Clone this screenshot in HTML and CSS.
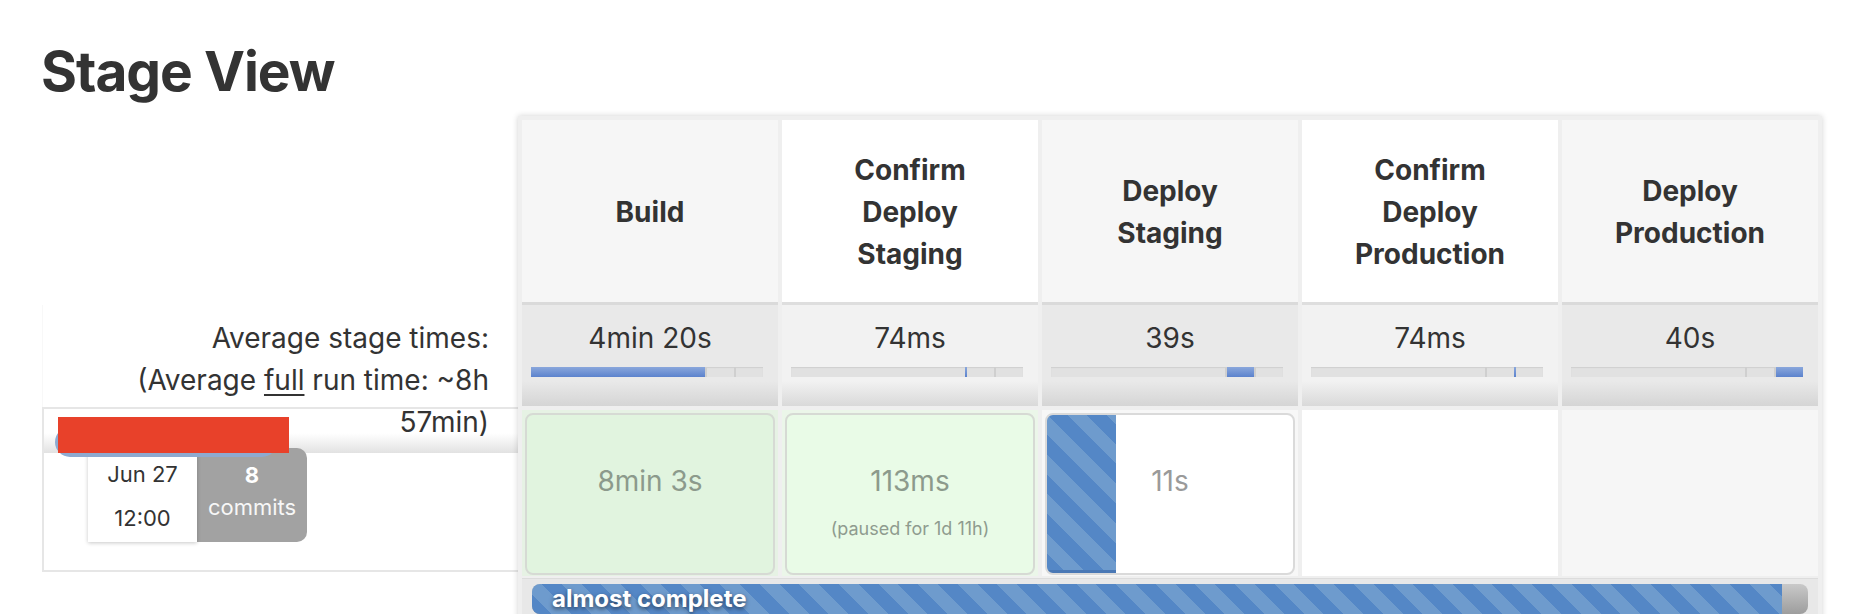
FILE: index.html
```html
<!DOCTYPE html>
<html lang="en">
<head>
<meta charset="utf-8">
<title>Stage View</title>
<link rel="stylesheet" href="styles.css">
</head>
<body>
<h1 class="title">Stage View</h1>
<div class="view">
  <div class="runs">
    <div class="runs-head"></div>
    <div class="avg-label">Average stage times:<br>(Average <u>full</u> run time: ~8h<br>57min)</div>
    <div class="run-row">
      <div class="run-band">
        <div class="run-pill"><span class="redact"></span></div>
      </div>
      <div class="run-meta">
        <div class="date">Jun 27<br>12:00</div>
        <div class="commits"><b>8</b><br>commits</div>
      </div>
    </div>
  </div>

  <div class="stages">
    <div class="h odd">Build</div>
    <div class="h even">Confirm Deploy Staging</div>
    <div class="h odd">Deploy Staging</div>
    <div class="h even">Confirm Deploy Production</div>
    <div class="h odd">Deploy Production</div>

    <div class="a odd">4min 20s
      <div class="bar"><span class="seg s1 on"></span><span class="mark"></span><span class="seg s3"></span><span class="mark"></span><span class="seg s5"></span></div>
    </div>
    <div class="a even">74ms
      <div class="bar"><span class="seg s1"></span><span class="mark on"></span><span class="seg s3"></span><span class="mark"></span><span class="seg s5"></span></div>
    </div>
    <div class="a odd">39s
      <div class="bar"><span class="seg s1"></span><span class="mark"></span><span class="seg s3 on"></span><span class="mark"></span><span class="seg s5"></span></div>
    </div>
    <div class="a even">74ms
      <div class="bar"><span class="seg s1"></span><span class="mark"></span><span class="seg s3"></span><span class="mark on"></span><span class="seg s5"></span></div>
    </div>
    <div class="a odd">40s
      <div class="bar"><span class="seg s1"></span><span class="mark"></span><span class="seg s3"></span><span class="mark"></span><span class="seg s5 on"></span></div>
    </div>

    <div class="c ok odd"><div class="box ok-odd">8min 3s</div></div>
    <div class="c ok even"><div class="box ok-even">113ms<div class="paused">(paused for 1d 11h)</div></div></div>
    <div class="c run-cell"><div class="box running">11s</div></div>
    <div class="c blank-even"></div>
    <div class="c blank-odd"></div>

    <div class="progress-row">
      <div class="progress"><div class="progress-fill" style="width: 98%">almost complete</div></div>
    </div>
  </div>
</div>
</body>
</html>
```

FILE: styles.css
```css
html, body {
  margin: 0;
  padding: 0;
  background: #fff;
}
body {
  font-family: Inter, "Noto Sans", sans-serif;
  color: #333;
  overflow: hidden;
  height: 614px;
}

.title {
  margin: 0 0 8px 41px;
  padding-top: 36px;
  height: 72px;
  font-size: 55px;
  line-height: 70px;
  font-weight: 700;
  letter-spacing: -1px;
  color: #333;
}

.view {
  display: flex;
  align-items: flex-start;
  padding-left: 42px;
}

/* left column: run info */
.runs {
  width: 476px;
  flex: none;
}
.runs-head {
  height: 189px;
}
.avg-label {
  height: 102px;
  box-sizing: border-box;
  padding: 12px 29px 0 0;
  text-align: right;
  font-size: 28px;
  line-height: 42px;
  color: #333;
  border-left: 1px solid #f8f8f8;
}
.avg-label u {
  text-underline-offset: 4px;
  text-decoration-thickness: 2px;
}
.run-row {
  height: 161px;
  border: 2px solid #e6e6e6;
  border-right: none;
}
.run-band {
  height: 44px;
  box-sizing: border-box;
  padding: 18px 0 0 11px;
  background: linear-gradient(#ffffff 55%, #e2e2e2);
}
.run-pill {
  position: relative;
  z-index: 2;
  width: 222px;
  height: 30px;
  border-radius: 15px;
  background: #8eaad0;
}
.redact {
  position: absolute;
  left: 3px;
  top: -10px;
  width: 231px;
  height: 36px;
  background: #e8412a;
}
.run-meta {
  display: flex;
  align-items: flex-start;
  margin: -5px 0 0 44px;
}
.date {
  margin-top: 4px;
  width: 109px;
  height: 90px;
  background: #fff;
  box-shadow: 0 1px 4px rgba(0, 0, 0, 0.22);
  text-align: center;
  font-size: 22px;
  line-height: 44px;
  color: #333;
  position: relative;
  z-index: 1;
}
.commits {
  width: 110px;
  height: 94px;
  box-sizing: border-box;
  padding-top: 11px;
  background: #a2a2a2;
  border-radius: 0 10px 10px 0;
  text-align: center;
  font-size: 22px;
  line-height: 32px;
  color: #f7f7f7;
}
.commits b {
  color: #fff;
}

/* stage table */
.stages {
  width: 1304px;
  flex: none;
  box-sizing: border-box;
  padding: 4px 4px 0;
  background: #efefef;
  box-shadow: 0 0 6px rgba(0, 0, 0, 0.18);
  display: grid;
  grid-template-columns: repeat(5, 256px);
  grid-template-rows: 182px 104px 170px auto;
  column-gap: 4px;
}

.h {
  display: flex;
  align-items: center;
  justify-content: center;
  text-align: center;
  padding: 2px 42px 0;
  font-size: 28px;
  line-height: 42px;
  font-weight: 700;
  color: #333;
}
.h.odd { background: #f6f6f6; }
.h.even { background: #ffffff; }

.a {
  padding-top: 15px;
  box-sizing: border-box;
  text-align: center;
  font-size: 28px;
  line-height: 42px;
  color: #333;
}
.a.odd {
  background: linear-gradient(#dadada 0 3px, #e9e9e9 3px 76%, #d5d5d5 100%);
}
.a.even {
  background: linear-gradient(#dedede 0 3px, #f2f2f2 3px 76%, #d9d9d9 100%);
}

.bar {
  display: flex;
  height: 10px;
  margin: 8px 15px 0 9px;
  background: #e1e1e1;
  box-shadow: inset 0 1px 1px rgba(0, 0, 0, 0.08);
}
.seg { display: block; height: 100%; }
.s1 { width: 174px; }
.s3 { width: 27px; }
.s5 { flex: 1; }
.mark {
  display: block;
  width: 2px;
  height: 100%;
  background: #cfcfcf;
}
.seg.on, .mark.on {
  background: linear-gradient(#8aa7dc, #5b82cd);
}

.c {
  margin-top: 4px;
  padding: 3px 3px 1px;
  box-sizing: border-box;
}
.c.ok.odd { background: #e6f2e4; }
.c.ok.even { background: #ebf6e9; }
.c.run-cell { background: #f7f7f7; }
.c.blank-even { background: #ffffff; }
.c.blank-odd { background: #f6f6f6; }

.box {
  height: 100%;
  box-sizing: border-box;
  border: 2px solid #d6dad4;
  border-radius: 8px;
  padding-top: 45px;
  text-align: center;
  font-size: 28px;
  line-height: 42px;
  color: #8c9a8c;
}
.box.ok-odd { background: #e1f4df; }
.box.ok-even { background: #e9fbe7; }
.paused {
  margin-top: 15px;
  font-size: 18px;
  line-height: 24px;
  color: #8f9b8f;
}
.box.running {
  border-color: #dadada;
  color: #9a9a9a;
  background:
    linear-gradient(#4a78b5, #4a78b5) left bottom / 69px 3px no-repeat,
    repeating-linear-gradient(45deg, #5487c6 0 14px, #6e9bcd 14px 28px) left top / 69px 100% no-repeat,
    #ffffff;
}

.progress-row {
  grid-column: 1 / -1;
  margin-top: 2px;
  border-top: 1px solid #dcdcdc;
  background: #e8e8e8;
  padding: 5px 10px 10px;
}
.progress {
  height: 30px;
  border-radius: 8px;
  overflow: hidden;
  background: linear-gradient(#c9c9c9, #9d9d9d);
}
.progress-fill {
  height: 100%;
  box-sizing: border-box;
  padding-left: 20px;
  background: repeating-linear-gradient(45deg, #5487c6 0 14px, #6e9bcd 14px 28px);
  color: #fff;
  font-size: 24px;
  line-height: 30px;
  font-weight: 700;
  text-shadow: 0 2px 4px rgba(0, 0, 0, 0.55);
  white-space: nowrap;
}
```
